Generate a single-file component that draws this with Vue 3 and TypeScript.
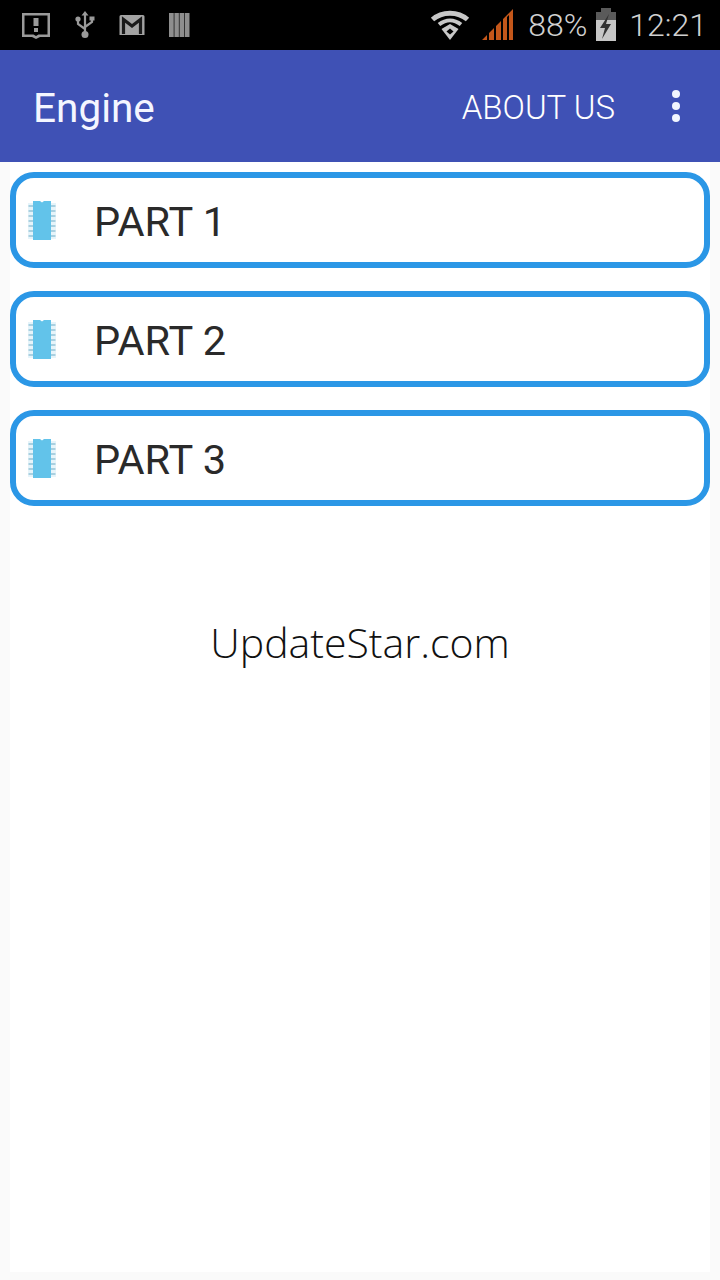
<script setup lang="ts">
const parts: string[] = ['PART 1', 'PART 2', 'PART 3']
const pins: number[] = [4, 9, 14, 19, 24, 29, 34]
</script>

<template>
  <div class="screen">
    <div class="status-bar">
      <div class="status-left">
        <svg width="30" height="28" viewBox="0 0 30 28">
          <path fill="#9a9a9a" fill-rule="evenodd" d="M1 2h28v24H19l-4 2-4-2H1zM3.500 4.500v19h9l2.500 1.500 2.500-1.500h9v-19z" />
          <path fill="#9a9a9a" d="M12.500 7h5v8h-5zM13 17h4v4h-4z" />
        </svg>
        <svg width="20" height="28" viewBox="0 0 20 28">
          <path fill="none" stroke="#9a9a9a" stroke-width="2.200" d="M10 3v20M3 9v4l7 5M17 8v3l-7 5" />
          <path fill="#9a9a9a" d="M10 0l3.500 4.500h-7zM14.500 5.500h5v4h-5z" />
          <circle cx="3" cy="8" r="2.600" fill="#9a9a9a" />
          <circle cx="10" cy="23.500" r="3.500" fill="#9a9a9a" />
        </svg>
        <svg width="26" height="24" viewBox="0 0 26 24">
          <path fill="#a3a3a3" d="M2 2h22a1.500 1.500 0 0 1 1.500 1.500V22H.5V3.500A1.500 1.500 0 0 1 2 2z" />
          <path fill="none" stroke="#1a1a1a" stroke-width="3.200" d="M4.500 21V6.500L13 13l8.500-6.500V21" />
        </svg>
        <svg width="21" height="26" viewBox="0 0 21 26">
          <path fill="#8e8e8e" d="M0 1h20.500v24H0z" />
          <path fill="#333" d="M4.600 1h1v24h-1zM9.800 1h1v24h-1zM15 1h1v24h-1z" />
        </svg>
      </div>
      <div class="status-right">
        <svg class="wifi" width="40" height="32" viewBox="0 0 40 32">
          <path fill="none" stroke="#c8c8c8" stroke-width="5" d="M2.500 10.500C12 2 28 2 37.500 10.500" />
          <path fill="none" stroke="#c8c8c8" stroke-width="4" d="M9 15.500c7-5.500 15-5.500 22 0" />
          <path fill="#c8c8c8" d="M20 15l8.500 5L20 31l-8.500-11z" />
          <path fill="#000" d="M20 19.500l3.500 3-3.500 3-3.500-3z" />
        </svg>
        <svg class="signal" width="33" height="32" viewBox="0 0 33 32">
          <path fill="#c4571a" d="M1 31 6 26v5zM8 31v-7l5-5v12zM15 31V17l5-5v19zM22 31V10l10-10v31h-4V6l-2 2v23z" />
        </svg>
        <span class="battery-text">88%</span>
        <svg width="22" height="34" viewBox="0 0 22 34">
          <path fill="#5a5a5a" d="M6 0h10v4H6z" />
          <path fill="#5a5a5a" d="M1 4h20v8H1z" />
          <path fill="#c6c6c6" d="M1 12h20v21H1z" />
          <path fill="#333" d="M14 6 5 20h5l-3 11 9-15h-5z" />
        </svg>
        <span class="clock">12:21</span>
      </div>
    </div>

    <div class="app-bar">
      <span class="title">Engine</span>
      <span class="about">ABOUT US</span>
      <div class="overflow">
        <i></i><i></i><i></i>
      </div>
    </div>

    <div class="content">
      <div class="list">
        <div v-for="part in parts" :key="part" class="part-row">
          <svg class="chip" width="28" height="39" viewBox="0 0 28 39">
            <rect x="0" y="2" width="28" height="36" fill="#e6f4fa" />
            <g fill="#a9d0e0">
              <template v-for="y in pins" :key="y">
                <rect x="0.500" :y="y" width="4.500" height="2" />
                <rect x="23" :y="y" width="4.500" height="2" />
              </template>
            </g>
            <path fill="#62c3ea" d="M5 0h7l2 1.500L16 0h7v39H5z" />
          </svg>
          <span class="part-label">{{ part }}</span>
        </div>
      </div>
      <div class="credit">UpdateStar.com</div>
    </div>
  </div>
</template>

<style>
html, body {
  margin: 0;
  background: #fafafa;
}
</style>

<style scoped>
.screen {
  width: 720px;
  height: 1280px;
  display: flex;
  flex-direction: column;
  overflow: hidden;
  background: #fafafa;
  font-family: Roboto, "Noto Sans", sans-serif;
}

.status-bar {
  height: 50px;
  flex: none;
  background: #000;
  display: flex;
  justify-content: space-between;
  align-items: center;
  box-sizing: border-box;
  padding: 0 13px 0 21px;
}
.status-left {
  display: flex;
  align-items: center;
  gap: 24px;
}
.status-right {
  display: flex;
  align-items: center;
}
.wifi {
  margin-right: 11px;
}
.signal {
  margin-right: 14px;
}
.battery-text,
.clock {
  color: #d0d0d0;
  font-size: 32px;
  font-weight: 300;
  line-height: 40px;
}
.battery-text {
  margin-right: 8px;
}
.clock {
  margin-left: 12px;
}

.app-bar {
  height: 112px;
  flex: none;
  background: #3f51b5;
  display: flex;
  align-items: center;
  color: #fff;
  padding-left: 33px;
  box-sizing: border-box;
}
.title {
  font-size: 40.500px;
  flex: 1;
  margin-top: 3px;
  color: #f4f6ff;
}
.about {
  font-size: 33px;
  font-weight: 300;
  margin-top: 3px;
}
.overflow {
  width: 10px;
  display: flex;
  flex-direction: column;
  align-items: center;
  gap: 4px;
  margin: 0 39px 0 56px;
}
.overflow i {
  width: 8px;
  height: 8px;
  border-radius: 50%;
  background: #f2f6ff;
}

.content {
  flex: 1;
  margin: 0 10px 8px;
  background: #fff;
  box-sizing: border-box;
}
.list {
  display: flex;
  flex-direction: column;
  gap: 23px;
  padding-top: 10px;
}
.part-row {
  height: 96px;
  box-sizing: border-box;
  border: 6px solid #2b97e6;
  border-radius: 24px;
  background: #fff;
  display: flex;
  align-items: center;
  padding-left: 12px;
}
.chip {
  flex: none;
}
.part-label {
  margin-left: 38px;
  margin-top: 3px;
  font-size: 41.500px;
  color: #2a2a2a;
}
.credit {
  margin-top: 109px;
  text-align: center;
  font-size: 41px;
  line-height: 54px;
  font-weight: 300;
  color: #111;
  font-family: "Open Sans", "Noto Sans", sans-serif;
}
</style>
